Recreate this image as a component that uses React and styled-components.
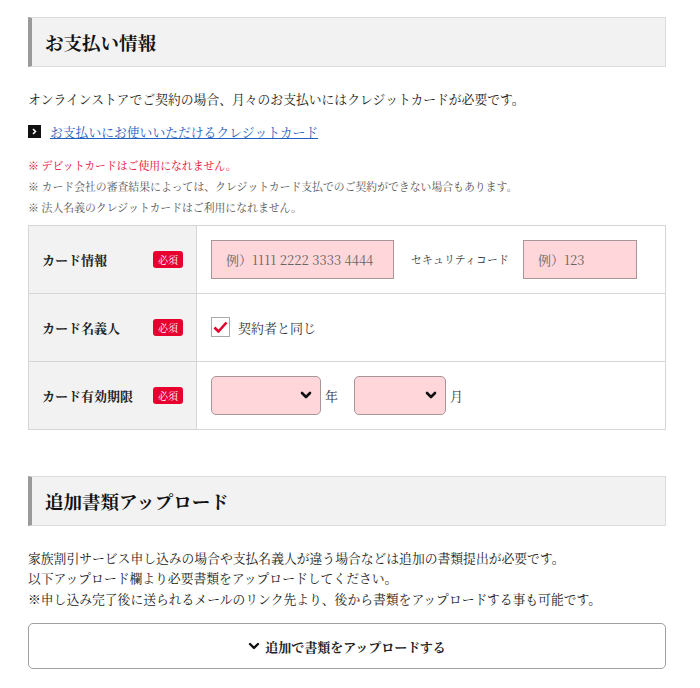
import React, { useState } from 'react';
import styled, { createGlobalStyle } from 'styled-components';

const GlobalStyle = createGlobalStyle`
  body {
    margin: 0;
    background: #fff;
    color: #222;
    font-family: 'Noto Serif CJK JP', 'Liberation Serif', 'Noto Sans CJK JP', serif;
  }
`;

const Page = styled.div`
  width: 638px;
  padding: 17px 0 20px 28px;
`;

const SectionTitle = styled.h2`
  margin: 0;
  height: 50px;
  box-sizing: border-box;
  display: flex;
  align-items: center;
  padding-left: 13px;
  background: #f2f2f2;
  border: 1px solid #dcdcdc;
  border-left: 4px solid #9a9a9a;
  font-size: 18.5px;
  font-weight: bold;
  color: #111;
`;

const Lead = styled.p`
  margin: 22px 0 0;
  font-size: 12.8px;
  line-height: 20.5px;
  color: #222;
`;

const LinkRow = styled.div`
  margin-top: 12px;
  display: flex;
  align-items: center;
  gap: 9px;
`;

const LinkIcon = styled.span`
  width: 13px;
  height: 13px;
  background: #111;
  display: flex;
  align-items: center;
  justify-content: center;
`;

const TextLink = styled.a`
  font-size: 12.8px;
  color: #1f5fbf;
  text-decoration: underline;
`;

const Notes = styled.ul`
  list-style: none;
  margin: 14px 0 0;
  padding: 0;
`;

const Note = styled.li`
  font-size: 10.85px;
  line-height: 21px;
  color: ${(p) => (p.$alert ? '#e5002d' : '#555')};
`;

const FormTable = styled.div`
  margin-top: 7px;
  border: 1px solid #d6d6d6;
  border-bottom: none;
`;

const Row = styled.div`
  display: grid;
  grid-template-columns: 168px 1fr;
  height: 68px;
  box-sizing: border-box;
  border-bottom: 1px solid #d6d6d6;
`;

const LabelCell = styled.div`
  background: #f2f2f2;
  border-right: 1px solid #d6d6d6;
  display: flex;
  align-items: center;
  justify-content: space-between;
  padding: 0 13px;
  font-size: 13px;
  font-weight: bold;
  color: #222;
`;

const Required = styled.span`
  background: #e8002f;
  color: #fff;
  font-size: 10px;
  font-weight: normal;
  width: 30px;
  height: 17px;
  border-radius: 3px;
  display: flex;
  align-items: center;
  justify-content: center;
`;

const FieldCell = styled.div`
  display: flex;
  align-items: center;
  padding-left: 14px;
`;

const TextInput = styled.input`
  width: ${(p) => p.$w}px;
  height: 39px;
  box-sizing: border-box;
  background: #ffd6d9;
  border: 1px solid #a89597;
  border-radius: 0;
  padding: 0 14px;
  font-family: inherit;
  font-size: 13px;
  color: #333;
  outline: none;

  &::placeholder {
    color: #666;
  }
`;

const SubLabel = styled.span`
  font-size: 10.8px;
  color: #333;
  margin: 0 14px 0 17px;
  letter-spacing: 0.2px;
`;

const CheckLabel = styled.label`
  display: flex;
  align-items: center;
  gap: 8px;
  font-size: 13px;
  color: #333;
  cursor: pointer;
`;

const CheckBox = styled.span`
  width: 19px;
  height: 20px;
  box-sizing: border-box;
  border: 1px solid #aaa;
  background: #fff;
  display: flex;
  align-items: center;
  justify-content: center;
`;

const SelectBox = styled.div`
  width: ${(p) => p.$w}px;
  height: 39px;
  box-sizing: border-box;
  background: #ffd6d9;
  border: 1px solid #a89597;
  border-radius: 5px;
  display: flex;
  align-items: center;
  justify-content: flex-end;
  padding-right: 8px;
`;

const Unit = styled.span`
  font-size: 13px;
  color: #333;
  margin: 0 ${(p) => p.$gap}px 0 4px;
`;

const UploadButton = styled.button`
  margin-top: 14px;
  width: 100%;
  height: 46px;
  background: #fff;
  border: 1px solid #a0a0a0;
  border-radius: 5px;
  display: flex;
  align-items: center;
  justify-content: center;
  gap: 5px;
  font-family: inherit;
  font-size: 13px;
  font-weight: bold;
  color: #222;
  cursor: pointer;
`;

const SecondSection = styled.div`
  margin-top: 46px;
`;

const Chevron = ({ size = 12, stroke = 2.6 }) => (
  <svg width={size} height={size} viewBox="0 0 12 12">
    <path d="M2 4l4 4 4-4" fill="none" stroke="#111" strokeWidth={stroke} strokeLinecap="round" strokeLinejoin="round" />
  </svg>
);

function App() {
  const [same, setSame] = useState(true);

  return (
    <Page>
      <GlobalStyle />
      <SectionTitle>お支払い情報</SectionTitle>
      <Lead>オンラインストアでご契約の場合、月々のお支払いにはクレジットカードが必要です。</Lead>
      <LinkRow>
        <LinkIcon>
          <svg width="7" height="7" viewBox="0 0 7 7">
            <path d="M2 1l2.5 2.5L2 6" fill="none" stroke="#fff" strokeWidth="1.6" />
          </svg>
        </LinkIcon>
        <TextLink href="#">お支払いにお使いいただけるクレジットカード</TextLink>
      </LinkRow>
      <Notes>
        <Note $alert>※ デビットカードはご使用になれません。</Note>
        <Note>※ カード会社の審査結果によっては、クレジットカード支払でのご契約ができない場合もあります。</Note>
        <Note>※ 法人名義のクレジットカードはご利用になれません。</Note>
      </Notes>

      <FormTable>
        <Row>
          <LabelCell>
            カード情報<Required>必須</Required>
          </LabelCell>
          <FieldCell>
            <TextInput $w={183} placeholder="例）1111 2222 3333 4444" />
            <SubLabel>セキュリティコード</SubLabel>
            <TextInput $w={114} placeholder="例）123" />
          </FieldCell>
        </Row>
        <Row>
          <LabelCell>
            カード名義人<Required>必須</Required>
          </LabelCell>
          <FieldCell>
            <CheckLabel onClick={() => setSame(!same)}>
              <CheckBox>
                {same && (
                  <svg width="15" height="13" viewBox="0 0 15 13">
                    <path d="M1.5 6.5l4 4 8-9" fill="none" stroke="#e5002d" strokeWidth="2.6" strokeLinejoin="round" />
                  </svg>
                )}
              </CheckBox>
              契約者と同じ
            </CheckLabel>
          </FieldCell>
        </Row>
        <Row>
          <LabelCell>
            カード有効期限<Required>必須</Required>
          </LabelCell>
          <FieldCell>
            <SelectBox $w={110}>
              <Chevron />
            </SelectBox>
            <Unit $gap={16}>年</Unit>
            <SelectBox $w={92}>
              <Chevron />
            </SelectBox>
            <Unit $gap={0}>月</Unit>
          </FieldCell>
        </Row>
      </FormTable>

      <SecondSection>
        <SectionTitle>追加書類アップロード</SectionTitle>
        <Lead>
          家族割引サービス申し込みの場合や支払名義人が違う場合などは追加の書類提出が必要です。
          <br />
          以下アップロード欄より必要書類をアップロードしてください。
          <br />
          ※申し込み完了後に送られるメールのリンク先より、後から書類をアップロードする事も可能です。
        </Lead>
        <UploadButton>
          <Chevron size={12} stroke={2.4} />
          追加で書類をアップロードする
        </UploadButton>
      </SecondSection>
    </Page>
  );
}

export default App;
